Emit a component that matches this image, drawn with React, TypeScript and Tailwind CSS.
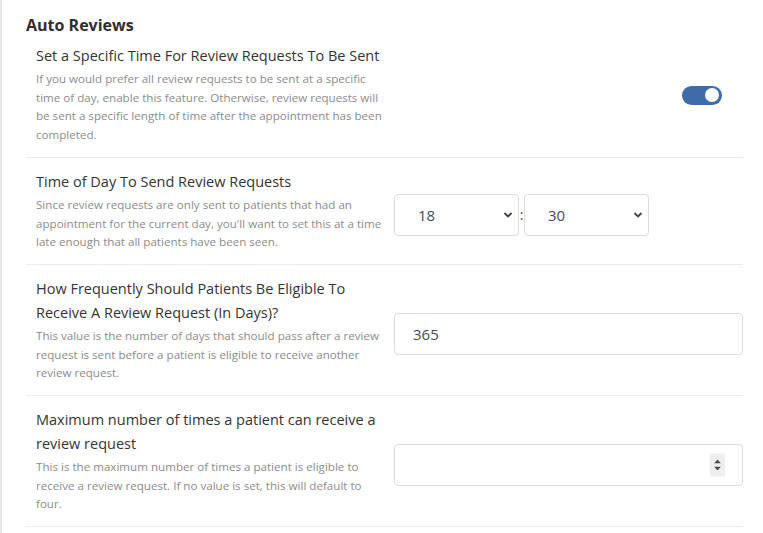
import React from "react";

const font = { fontFamily: '"Open Sans", "Noto Sans", Arial, sans-serif' };

function Row({
  title,
  desc,
  children,
  first,
}: {
  title: React.ReactNode;
  desc: React.ReactNode;
  children: React.ReactNode;
  first?: boolean;
}) {
  return (
    <div
      className={`flex items-center border-b border-[#ececec] pb-[12px] ${first ? "pt-[8px]" : "pt-[12px]"}`}
    >
      <div className="w-[368px] shrink-0 pl-[10px] pr-[10px]">
        <div className="text-[14.5px] leading-[24px] text-[#343434]">{title}</div>
        <div className="mt-[2px] text-[11.6px] leading-[18.7px] text-[#8c8c8c]">{desc}</div>
      </div>
      <div className="flex flex-1 items-center pt-[8px]">{children}</div>
    </div>
  );
}

function Chevron() {
  return (
    <svg width="10" height="7" viewBox="0 0 10 7" className="absolute right-[5px] top-1/2 -translate-y-1/2">
      <path d="M1.5 1.5 L5 5 L8.5 1.5" fill="none" stroke="#3f3f3f" strokeWidth="1.8" />
    </svg>
  );
}

function Select({ value, width }: { value: string; width: string }) {
  return (
    <div className={`relative h-[42px] rounded-[4px] border border-[#dcdcdc] bg-white ${width}`}>
      <span className="absolute left-[23px] top-1/2 -translate-y-1/2 text-[15px] text-[#444c55]">{value}</span>
      <Chevron />
    </div>
  );
}

export default function App() {
  return (
    <div className="min-h-[533px] w-[763px] bg-white" style={font}>
      <div className="min-h-[533px] border-l-2 border-[#e6e6e6] pl-[24px] pr-[20px] pt-[14px]">
        <h2 className="text-[16px] font-bold leading-[22px] text-[#2f2f2f]">Auto Reviews</h2>
        <div>
          <Row
            first
            title="Set a Specific Time For Review Requests To Be Sent"
            desc="If you would prefer all review requests to be sent at a specific time of day, enable this feature. Otherwise, review requests will be sent a specific length of time after the appointment has been completed."
          >
            <div className="flex flex-1 justify-end pr-[21px]">
              <div className="relative mb-[6px] h-[19px] w-[40px] rounded-full bg-[#3e6ca9]">
                <div className="absolute right-[3px] top-[2.5px] h-[14px] w-[14px] rounded-full bg-white" />
              </div>
            </div>
          </Row>
          <Row
            title="Time of Day To Send Review Requests"
            desc="Since review requests are only sent to patients that had an appointment for the current day, you'll want to set this at a time late enough that all patients have been seen."
          >
            <div className="flex items-center">
              <Select value="18" width="w-[125px]" />
              <span className="w-[5px] text-center text-[14px] text-[#444]">:</span>
              <Select value="30" width="w-[125px]" />
            </div>
          </Row>
          <Row
            title="How Frequently Should Patients Be Eligible To Receive A Review Request (In Days)?"
            desc="This value is the number of days that should pass after a review request is sent before a patient is eligible to receive another review request."
          >
            <div className="flex h-[42px] flex-1 items-center rounded-[4px] border border-[#dcdcdc] bg-white pl-[18px] text-[15px] text-[#444c55]">
              365
            </div>
          </Row>
          <Row
            title="Maximum number of times a patient can receive a review request"
            desc="This is the maximum number of times a patient is eligible to receive a review request. If no value is set, this will default to four."
          >
            <div className="relative h-[42px] flex-1 rounded-[4px] border border-[#dcdcdc] bg-white">
              <div className="absolute right-[17px] top-1/2 flex h-[23px] w-[15px] -translate-y-1/2 flex-col items-center justify-center gap-[3px] bg-[#efefef]">
                <svg width="7" height="4" viewBox="0 0 7 4">
                  <path d="M0 4 L3.5 0 L7 4 Z" fill="#4a4a4a" />
                </svg>
                <svg width="7" height="4" viewBox="0 0 7 4">
                  <path d="M0 0 L3.5 4 L7 0 Z" fill="#4a4a4a" />
                </svg>
              </div>
            </div>
          </Row>
        </div>
      </div>
    </div>
  );
}
